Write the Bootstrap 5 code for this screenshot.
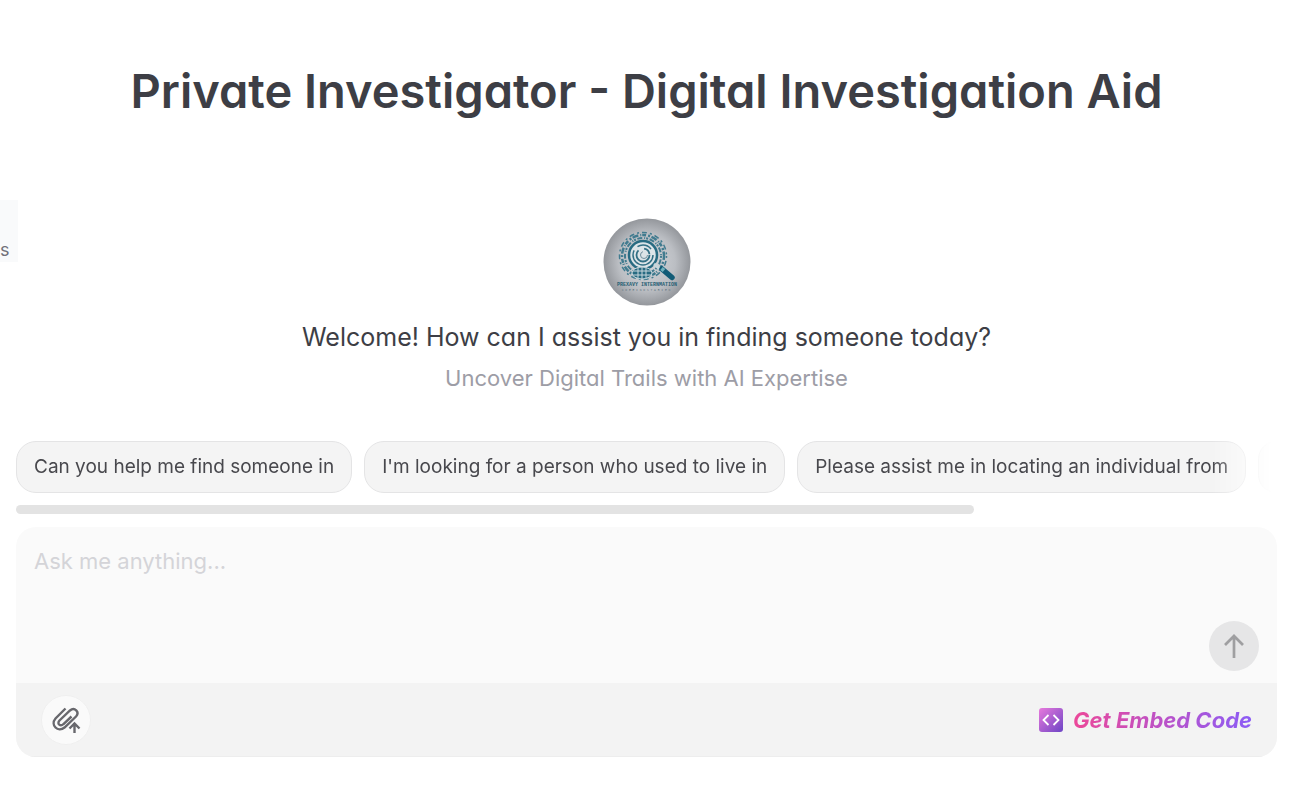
<!DOCTYPE html>
<html lang="en">
<head>
<meta charset="utf-8">
<meta name="viewport" content="width=device-width, initial-scale=1">
<title>Private Investigator - Digital Investigation Aid</title>
<link href="https://cdn.jsdelivr.net/npm/bootstrap@5.3.0/dist/css/bootstrap.min.css" rel="stylesheet">
<style>
body{font-family:Inter,"Liberation Sans",sans-serif;font-feature-settings:"cv11";color:#3d3e45;background:#fff}
.page{padding:0 31px 0 16px}
.title{font-size:47px;line-height:60px;font-weight:600;margin:0;padding-top:61px}
.avatar{width:88px;height:88px;margin-top:97px}
.welcome{font-size:25px;line-height:32px;margin:15px 0 0}
.tagline{font-size:22px;line-height:28px;margin:11px 0 0;color:#9d9da6}
.prompts{gap:12px;margin:49px 5px 0 0;-webkit-mask-image:linear-gradient(to right,#000 calc(100% - 60px),transparent);mask-image:linear-gradient(to right,#000 calc(100% - 60px),transparent)}
.prompt{height:52px;padding:0 17px;border:1px solid #e4e4e5;border-radius:20px;background:#f4f4f4;color:#48484d;font-size:19px;line-height:24px}
.track{height:9px;margin-top:12px}
.thumb{width:76%;height:9px;border-radius:5px;background:#e3e3e3}
.composer{margin-top:13px;border-radius:20px;background:#fafafa}
.ask{height:156px;padding:18px 80px 18px 18px;resize:none;outline:0;font-size:22px;line-height:32px;color:#3d3e45}
.ask::placeholder{color:#d4d4d8}
.send{right:18px;bottom:12px;width:50px;height:50px;background:#e6e6e7;color:#9f9fa1}
.tools{height:74px;padding:0 25px;background:#f3f3f3;border-bottom:1px solid #ededed}
.attach{width:50px;height:50px;background:#fafafa;border:1px solid #efefef;color:#68686d}
.embed{gap:10px;font-size:22px;line-height:28px;font-weight:700;font-style:italic}
.embed-text{background:linear-gradient(90deg,#ec4899,#8b5cf6);-webkit-background-clip:text;background-clip:text;color:transparent}
.side{left:0;top:200px;width:18px;height:62px;background:#f9fafb;color:#71717a;font-size:18px;line-height:24px}
</style>
</head>
<body>
<aside class="side position-absolute d-flex align-items-end overflow-hidden"><span>s</span></aside>
<main class="page">
<header class="text-center">
<h1 class="title">Private Investigator - Digital Investigation Aid</h1>
<svg class="avatar" viewBox="0 0 88 88" role="img" aria-label="Private Investigator logo">
<defs><radialGradient id="metal"><stop offset="0" stop-color="#d6d8dc"/><stop offset=".65" stop-color="#bbbec3"/><stop offset="1" stop-color="#94979c"/></radialGradient></defs>
<circle cx="44" cy="44" r="43.5" fill="url(#metal)"/>
<g fill="none" stroke="#417b8f">
<circle cx="40" cy="38" r="21" stroke-width="2.500" stroke-dasharray="4 2 2 1.5 6 2 1 1"/>
<circle cx="40" cy="38" r="18" stroke-width="2" stroke-dasharray="2 1.5 5 2 1 1"/>
<circle cx="40" cy="38" r="23.500" stroke-width="1.500" stroke-dasharray="2 3 5 3"/>
</g>
<circle cx="40" cy="37" r="14" fill="#dce4e8" stroke="#286b82" stroke-width="2.500"/>
<g fill="none" stroke="#326f84"><circle cx="40" cy="37" r="10" stroke-width="1.500" stroke-dasharray="36 5 15 7"/><circle cx="40" cy="37" r="6.500" stroke-width="1.800" stroke-dasharray="25 6 8 2"/><circle cx="41" cy="37" r="3.500" stroke="#718f9d" stroke-dasharray="15 7"/></g>
<path d="M51 46l6 5" stroke="#c8d7dc" stroke-width="3"/><path d="M59 51L69 59.500" stroke="#125b76" stroke-width="5.500" stroke-linecap="round"/><path d="M58.500 50.500L61 52.500" stroke="#72b2bd" stroke-width="4"/>
<ellipse cx="39" cy="55" rx="10" ry="6" fill="#286b82" stroke="#c8d7dc"/><path d="M30 53h18M30 57h18M35 49v11M39 49v12M43 49v11" stroke="#c8d7dc" stroke-width="1"/>
<text x="44" y="68" text-anchor="middle" font-family="Liberation Mono" font-weight="700" font-size="5" fill="#285f73">PREXAVY INTERNMATION</text>
<text x="43" y="73" text-anchor="middle" font-family="Liberation Mono" font-size="3" fill="#61747f">C O E E  I N O S T A R I E N</text>
</svg>
<p class="welcome">Welcome! How can I assist you in finding someone today?</p>
<p class="tagline">Uncover Digital Trails with AI Expertise</p>
</header>
<div class="prompts d-flex overflow-hidden">
<button type="button" class="prompt text-nowrap flex-shrink-0">Can you help me find someone in</button>
<button type="button" class="prompt text-nowrap flex-shrink-0">I'm looking for a person who used to live in</button>
<button type="button" class="prompt text-nowrap flex-shrink-0">Please assist me in locating an individual from</button>
<button type="button" class="prompt text-nowrap flex-shrink-0" aria-label="More suggestions"></button>
</div>
<div class="track"><div class="thumb"></div></div>
<form class="composer overflow-hidden">
<div class="position-relative">
<textarea id="ask" class="ask d-block w-100 border-0 bg-transparent" aria-label="Ask me anything" placeholder="Ask me anything..."></textarea>
<button type="button" class="send position-absolute border-0 rounded-circle p-0 d-flex align-items-center justify-content-center" aria-label="Send">
<svg width="24" height="28" viewBox="0 0 24 28" fill="none" stroke="currentColor" stroke-width="2.700"><path d="M12 26V4M3 13l9-9 9 9"/></svg>
</button>
</div>
<div class="tools d-flex align-items-center justify-content-between">
<button type="button" class="attach rounded-circle p-0 d-flex align-items-center justify-content-center" aria-label="Attach a file">
<svg width="30" height="30" viewBox="0 0 30 30" fill="none" stroke="currentColor" stroke-width="2.400"><path d="M14.500 3.500L4.500 13.500C-1 20 7 28 13.500 22.500L25 11.500C29 7 23.500 1.500 19 5.500L8.500 15.500C5.500 19 9.500 22 12.500 19L20.500 11.500"/><path d="M23.500 28V18.500M18.500 23.500l5-5 5 5"/></svg>
</button>
<a href="#" class="embed d-flex align-items-center text-decoration-none">
<svg width="24" height="24" viewBox="0 0 24 24"><defs><linearGradient id="violet" x1="0" y1="0" x2="1" y2="1"><stop stop-color="#e879dc"/><stop offset="1" stop-color="#6d45c5"/></linearGradient></defs><rect width="24" height="24" rx="3" fill="url(#violet)"/><path d="M9.500 7l-5 5 5 5M14.500 7l5 5-5 5" fill="none" stroke="#fff" stroke-width="1.800"/></svg>
<span class="embed-text">Get Embed Code</span></a>
</div>
</form>
</main>
<script src="https://cdn.jsdelivr.net/npm/bootstrap@5.3.0/dist/js/bootstrap.bundle.min.js"></script>
</body>
</html>
